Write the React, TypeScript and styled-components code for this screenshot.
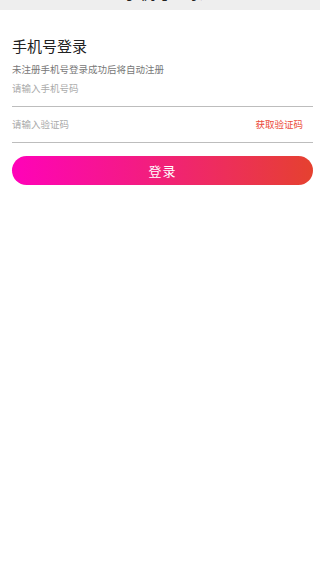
import React from 'react';
import styled, { createGlobalStyle } from 'styled-components';

const GlobalStyle = createGlobalStyle`
  html, body {
    margin: 0;
    padding: 0;
    background: #fff;
    font-family: "Noto Sans CJK SC", "Noto Sans", sans-serif;
    overflow: hidden;
  }
  * { box-sizing: border-box; }
`;

const Page = styled.div`
  width: 320px;
  height: 564px;
  display: flex;
  flex-direction: column;
  background: #fff;
`;

const Header = styled.header`
  height: 44px;
  margin-top: -34px;
  background: #eeeeee;
  display: flex;
  align-items: flex-end;
  justify-content: center;
  padding-bottom: 10px;
  position: relative;
`;

const BackArrow = styled.span`
  position: absolute;
  left: 4px;
  bottom: 9px;
  font-size: 16px;
  line-height: 16px;
  color: #555;
`;

const HeaderTitle = styled.h1`
  margin: 0;
  font-size: 16px;
  line-height: 16px;
  font-weight: 400;
  color: #222;
  padding-left: 6px;
`;

const Body = styled.main`
  padding: 26px 7px 0 12px;
  display: flex;
  flex-direction: column;
`;

const Title = styled.h2`
  margin: 0;
  font-size: 15px;
  line-height: 20px;
  font-weight: 400;
  color: #222;
`;

const Subtitle = styled.p`
  margin: 6px 0 0;
  font-size: 9.5px;
  line-height: 14px;
  color: #777;
`;

const Field = styled.div<{ $top: number }>`
  margin-top: ${(p) => p.$top}px;
  height: 30px;
  display: flex;
  align-items: center;
  justify-content: space-between;
  border-bottom: 1px solid #bdbdbd;
  padding-bottom: 8px;
`;

const Input = styled.input`
  border: none;
  outline: none;
  padding: 0;
  flex: 1;
  font-family: inherit;
  font-size: 9.5px;
  color: #333;
  background: transparent;
  &::placeholder {
    color: #aaa;
  }
`;

const CodeButton = styled.button`
  border: none;
  background: none;
  padding: 0 10px 0 0;
  font-family: inherit;
  font-size: 9.5px;
  color: #ec4b3a;
`;

const LoginButton = styled.button`
  margin-top: 13px;
  height: 29px;
  border: none;
  border-radius: 15px;
  background: linear-gradient(90deg, #ff02b9 0%, #f41a86 40%, #ec3154 75%, #e5412f 100%);
  color: #fff;
  font-family: inherit;
  font-size: 13px;
  letter-spacing: 1px;
`;

export default function App() {
  return (
    <>
      <GlobalStyle />
      <Page>
        <Header>
          <BackArrow>‹</BackArrow>
          <HeaderTitle>手机号登录</HeaderTitle>
        </Header>
        <Body>
          <Title>手机号登录</Title>
          <Subtitle>未注册手机号登录成功后将自动注册</Subtitle>
          <Field $top={1}>
            <Input placeholder="请输入手机号码" />
          </Field>
          <Field $top={6}>
            <Input placeholder="请输入验证码" />
            <CodeButton>获取验证码</CodeButton>
          </Field>
          <LoginButton>登录</LoginButton>
        </Body>
      </Page>
    </>
  );
}
